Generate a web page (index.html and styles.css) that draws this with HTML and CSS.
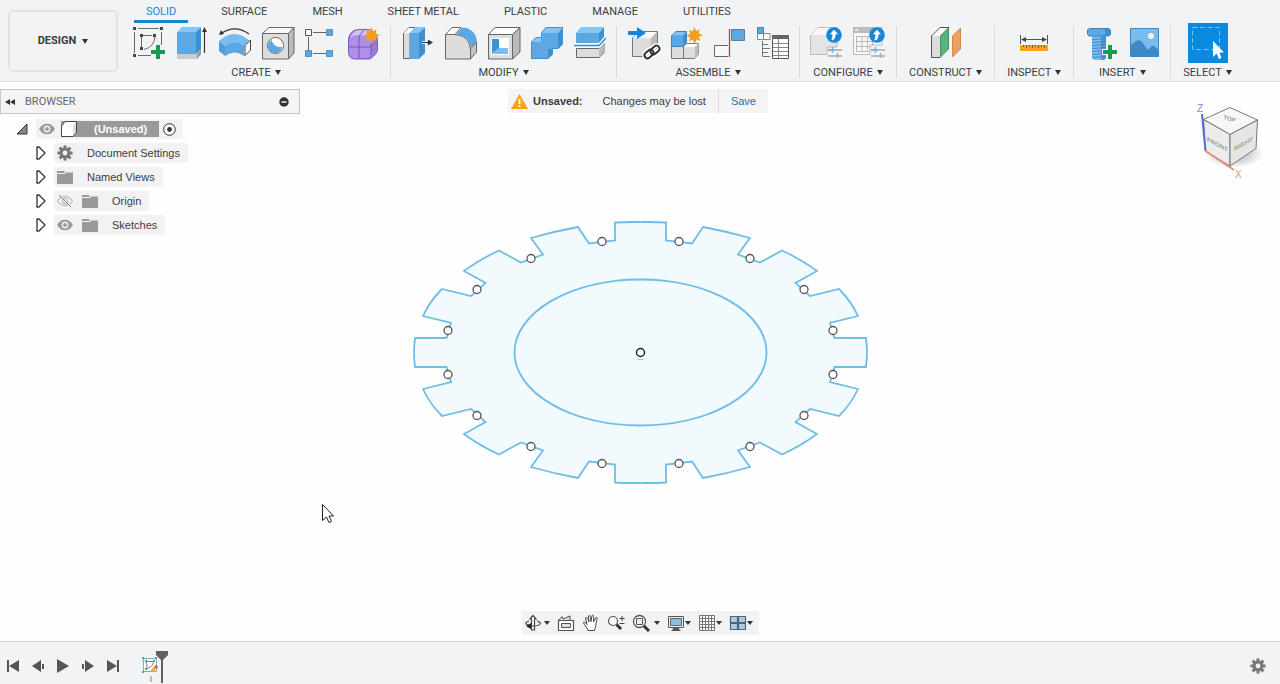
FILE: index.html
```html
<!DOCTYPE html>
<html lang="en">
<head>
<meta charset="utf-8">
<title>Design workspace</title>
<link rel="stylesheet" href="styles.css">
</head>
<body>
<svg class="defs" aria-hidden="true">
  <defs>
    <symbol id="star" viewBox="-9 -9 18 18"><path fill="#f79d1c" d="M0-9 1.8-4.6 5.6-6.6 4.3-2.5 9-.2 4.5 1.5 6.2 5.7 2.2 4.3.2 9-2 4.4-6.1 6.2-4.4 2-9 .2-4.4-1.9-6-5.9-1.9-4.5Z"/></symbol>
    <symbol id="eye" viewBox="0 0 16 12"><path fill="#999" d="M0 6C4-1 12-1 16 6 12 13 4 13 0 6Z"/><circle cx="8" cy="6" r="3.4" fill="#f2f2f4"/><circle cx="8" cy="6" r="2" fill="#999"/></symbol>
    <symbol id="folder" viewBox="0 0 16 13"><path fill="#999" d="M0 0H7L8 2H0ZM0 3H8L9 1.500H16V13H0Z"/></symbol>
    <symbol id="open" viewBox="0 0 10 14"><path fill="#fff" stroke="#333" stroke-width="1.3" stroke-linejoin="round" d="M1 1H3L9 7 3 13H1Z"/></symbol>
    <symbol id="gear" viewBox="-8 -8 16 16"><g fill="#777"><circle r="5.4"/><path id="cog" d="M-1.5-7.6H1.5V7.6H-1.5Z"/><use href="#cog" transform="rotate(45)"/><use href="#cog" transform="rotate(90)"/><use href="#cog" transform="rotate(135)"/></g><circle r="2.4" fill="#f2f2f4"/></symbol>
    <symbol id="up" viewBox="-8 -8 16 16"><circle r="7.8" fill="#1387dc"/><path fill="#fff" d="M0-5.2 4-.8H1.7Q1.7 3 -.8 5.2H-2.6Q-1.4 2-1.6-.8H-4Z"/></symbol>
    <symbol id="sliders" viewBox="0 0 14 11"><g stroke-width="1.4" fill="none"><path stroke="#a9a9ab" d="M0 3H14M0 9H14"/><path stroke="#72b2df" d="M4.5 0V6"/><path stroke="#72b2df" d="M0 3H7"/><path stroke="#a9a9ab" d="M9.5 6V11"/></g></symbol>
    <symbol id="plus" viewBox="0 0 14 14"><path fill="#189b50" d="M5 0H9V5H14V9H9V14H5V9H0V5H5Z"/></symbol>
  </defs>
</svg>

<header class="toolbar">
  <button class="workspace">DESIGN <span class="caret"></span></button>
  <div class="ribbon">
    <nav class="tabs" aria-label="Toolbar tabs">
      <button class="tab active">SOLID</button>
      <button class="tab">SURFACE</button>
      <button class="tab">MESH</button>
      <button class="tab">SHEET METAL</button>
      <button class="tab">PLASTIC</button>
      <button class="tab">MANAGE</button>
      <button class="tab">UTILITIES</button>
    </nav>
    <div class="groups">
      <section class="group">
        <div class="tools">
          <button class="tool" aria-label="Create sketch"><svg viewBox="0 0 36 36"><g fill="none" stroke="#6a6a6a"><path d="M7 3.5H28M3.5 7V28M7 30.5H20M30.5 7V20M12 10.5H21M10.5 12V22M24 12Q23 22 13 24.500"/></g><g fill="#444"><path d="M2 2h3v3H2zM29 2h3v3h-3zM2 29h3v3H2zM9 9h3v3H9zM22 9h3v3h-3zM9 22h3v3H9z"/></g><use href="#plus" x="20" y="20" width="14" height="14"/></svg></button>
          <button class="tool" aria-label="Extrude"><svg viewBox="1 0 36 36"><path fill="#ccc" d="M4 29H24L28 24V29L24 34H4Z"/><path fill="#999" d="M24 29 28 24V29L24 34Z"/><path fill="#5ba8e5" d="M4 7H23V29H4Z"/><path fill="#85c5f4" d="M4 7 9 2H28L23 7Z"/><path fill="#3d8fce" d="M23 7 28 2V24L23 29Z"/><path stroke="#333" stroke-width="1.200" d="M31.500 28V5"/><path fill="#333" d="M31.500 2 34 7H29Z"/></svg></button>
          <button class="tool" aria-label="Revolve"><svg viewBox="0 0 36 36"><path fill="#79bdf0" d="M2 16Q17 2 33 16L28 21Q18 14 8 21Z"/><path fill="#4f9fdc" d="M2 16 8 21V31L2 26Z"/><path fill="#5ba8e5" d="M8 21Q18 14 27 20.500V31Q18 24 8 31Z"/><path fill="#fff" stroke="#444" d="M28 20.500 33.500 15V25L28 30.500Z"/><path fill="none" stroke="#333" stroke-width="1.200" d="M4 8.500Q18-1 32 9"/><path fill="#333" d="M2 10 4 5 7 9Z"/></svg></button>
          <button class="tool" aria-label="Hole"><svg viewBox="0 0 36 36"><g stroke="#666" stroke-linejoin="round"><path fill="#ddd" d="M2.500 8.500H28.500V34H2.500Z"/><path fill="#fafafa" d="M2.500 8.500 9 2.500H34L28.500 8.500Z"/><path fill="#bbb" d="M28.500 8.500 34 2.500V28L28.500 34Z"/><circle cx="15.500" cy="20.500" r="8" fill="#fff"/></g><path fill="#5ba8e5" d="M11.500 15A7 7 0 1 0 22 22Q14 23 11.500 15Z"/></svg></button>
          <button class="tool" aria-label="Pattern"><svg viewBox="2 0 36 36"><path stroke="#666" d="M12 7.500H25M7.500 12V25M12 28.500H25"/><path fill="#fff" stroke="#555" d="M4.500 4.500h6v6h-6z"/><path fill="#5ba8e5" stroke="#4d94ca" d="M25.500 4.500h6v6h-6zM4.500 25.500h6v6h-6zM25.500 25.500h6v6h-6z"/></svg></button>
          <button class="tool" aria-label="Create form"><svg viewBox="1 0 36 36"><path fill="#9b7bdd" stroke="#7c5dbb" d="M3.500 14Q3.500 9 9 5.500Q12 4 24 4.500Q32 7 32.500 15V25Q32 29 25 34H9Q3.500 33 3.500 27Z"/><path fill="#ae8fea" d="M4 15Q5 11 10 11H21Q26 12 26 17V28Q25 33 21 33H9Q4 32 4 27Z"/><path fill="#d4c1f7" d="M5 12Q9 5 14 5H25L22 10.500H10Z"/><path fill="none" stroke="#7756b8" d="M14 33V11L19 5M4 22H26L32 17M26 17V30"/><use href="#star" x="18" y="2" width="17" height="17"/></svg></button>
        </div>
        <button class="label">CREATE <span class="caret"></span></button>
      </section>
      <section class="group">
        <div class="tools">
          <button class="tool" aria-label="Press pull"><svg viewBox="1 0 36 36"><path fill="#ddd" stroke="#666" d="M4.500 8.500 10 2.500H16L11 8.500V33.500H4.500Z"/><path fill="#fff" d="M5 8 10 3H15L11 8Z"/><path fill="#5ba8e5" d="M11 8H20V34H11Z"/><path fill="#85c5f4" d="M11 8 16 2H26L20 8Z"/><path fill="#3d8fce" d="M20 8 26 2V28L20 34Z"/><path stroke="#fff" stroke-width="3" d="M23 17.500H28"/><path stroke="#333" stroke-width="1.200" d="M23 17.500H30"/><path fill="#333" d="M29 14.500 34 17.500 29 20.500Z"/></svg></button>
          <button class="tool" aria-label="Fillet"><svg viewBox="1 0 36 36"><path fill="#fff" stroke="#666" d="M3.500 9.500 10 2.500H19L13 9.500Z"/><path fill="#c4c4c4" stroke="#666" d="M28.500 24 34.500 17V27L28.500 34Z"/><path fill="#5ba8e5" d="M14 9.500 20 2.500Q33 3 35 16L29 23Q27 10 14 9.500Z"/><path fill="#ddd" stroke="#666" d="M3.500 9.500H13Q27 10 28.500 24V34H3.500Z"/></svg></button>
          <button class="tool" aria-label="Shell"><svg viewBox="0 0 36 36"><g stroke="#666" stroke-linejoin="round"><path fill="#ddd" d="M2.500 9.500H26.500V34H2.500Z"/><path fill="#fff" d="M2.500 9.500 9 2.500H34L26.500 9.500Z"/><path fill="#bbb" d="M26.500 9.500 34 2.500V27L26.500 34Z"/></g><path fill="#fff" d="M5 13H23V30H5Z"/><path fill="#3d8fce" d="M6 14H13V23L6 29Z"/><path fill="#79bdf0" d="M7 29 12 23H22V29Z"/></svg></button>
          <button class="tool" aria-label="Combine"><svg viewBox="0 0 36 36"><path fill="#85c5f4" d="M2 17 7 12H12V8L17 2H34L29 8V18Z"/><path fill="#5ba8e5" d="M2 17H12V8H29V24H19V34H2Z"/><path fill="#3d8fce" d="M29 8 34 2V19L29 24H24V29L19 34V24H29Z"/><path fill="none" stroke="#4691cb" d="M2.500 17 7 12.500H12.500V8L17 2.500H33.500V19L29 23.500H23.500V29L19 33.500H2.500Z"/></svg></button>
          <button class="tool" aria-label="Split body"><svg viewBox="0 0 36 36"><path fill="#ddd" stroke="#666" d="M4.500 23.500H27L32 18V28L27 32.500H4.500Z"/><path fill="#bbb" d="M27 23 32 18V28L27 32.500Z"/><path fill="#5ba8e5" d="M4 8H27V18H4Z"/><path fill="#85c5f4" d="M4 8 9 2H32L27 8Z"/><path fill="#3d8fce" d="M27 8 32 2V12L27 18Z"/><path fill="none" stroke="#fff" stroke-width="4" d="M2 20.500H27L34 13"/><path fill="none" stroke="#238bd2" stroke-width="1.400" d="M2 20.500H27L34 13"/></svg></button>
        </div>
        <button class="label">MODIFY <span class="caret"></span></button>
      </section>
      <section class="group">
        <div class="tools">
          <button class="tool" aria-label="Insert component"><svg viewBox="0 0 36 36"><path fill="#ddd" stroke="#777" d="M6.500 13 13 6.500H31.500V26L26 31.500H6.500Z"/><path fill="#fafafa" d="M7 13 13 7H31L25 13Z"/><path fill="#bbb" d="M25 13 31 7V26L25 31Z"/><path fill="#1387dc" d="M2 6H11V2L20 8 11 14V10H2Z"/><g fill="none" stroke="#fff" stroke-width="5"><rect x="18" y="26" width="10" height="6" rx="3" transform="rotate(-42 23 29)"/><rect x="24" y="22" width="10" height="6" rx="3" transform="rotate(-42 29 25)"/></g><g fill="none" stroke="#333" stroke-width="2"><rect x="18" y="26" width="10" height="6" rx="3" transform="rotate(-42 23 29)"/><rect x="24" y="22" width="10" height="6" rx="3" transform="rotate(-42 29 25)"/></g></svg></button>
          <button class="tool" aria-label="New component"><svg viewBox="1 0 36 36"><path fill="#ddd" stroke="#777" d="M3.500 21.500H15.500L18.500 18.500H30.500V29L26.500 33.500H3.500Z"/><path fill="#fff" d="M16 22 19 19H30L27 22Z"/><path fill="#bbb" d="M27 22 30.500 18.500V29L27 33Z"/><path stroke="#777" d="M15.500 21V33"/><path fill="#5ba8e5" stroke="#4084b9" d="M3.500 10.500 8 6.500H18.500V17L15.500 21.500H3.500Z"/><path fill="#85c5f4" d="M4 10 8 7H18L15 10Z"/><path fill="#3d8fce" d="M15 11 18 7V17L15 21Z"/><use href="#star" x="18" y="2" width="17" height="17"/></svg></button>
          <button class="tool" aria-label="Joint"><svg viewBox="0 0 36 36"><path fill="#f8f8f8" stroke="#666" d="M16 20.500H2.500V31.500H16"/><path stroke="#b5482b" stroke-width="1.300" d="M17.500 4V32"/><path fill="#5ba8e5" stroke="#5d7f9b" d="M19.500 4.500H32.500V15.500H19.500Z"/></svg></button>
          <button class="tool" aria-label="Bill of materials"><svg viewBox="0 0 36 36"><path fill="#fff" stroke="#888" d="M2.500 8.500h12.500v6H2.500zM8.500 8.500v6"/><path fill="#5ba8e5" stroke="#4084b9" d="M2.500 2.500h6v6h-6z"/><path fill="none" stroke="#777" d="M7.500 16V31.500H15M7.500 19.500H13M7.500 23.500H15M7.500 27.500H13"/><path fill="#fff" stroke="#555" d="M17.500 10.500H33.500V33.500H17.500Z"/><path fill="#666" d="M17 10H34V14H17Z"/><path stroke="#888" d="M18 18.500H33M18 22.500H33M18 26.500H33M18 30.500H33M23.500 14V33"/></svg></button>
        </div>
        <button class="label">ASSEMBLE <span class="caret"></span></button>
      </section>
      <section class="group">
        <div class="tools">
          <button class="tool" aria-label="Configure design"><svg viewBox="0 0 36 36"><path fill="#e4e4e5" stroke="#bbb" d="M1.500 10.500 9 2.500H28V22H18V29.500H1.500Z"/><path fill="#f8f8f8" d="M2 10 9 3H27L20 10Z"/><use href="#up" x="17" y="2" width="16" height="16"/><use href="#sliders" x="19" y="22" width="14" height="11"/></svg></button>
          <button class="tool" aria-label="Configuration table"><svg viewBox="0 0 36 36"><path fill="#f8f8f8" stroke="#bbb" d="M1.500 2.500H30V20H18V29.500H1.500Z"/><path fill="#bbb" d="M1 2H30V8H1Z"/><path fill="#eee" d="M3 4h3v2H3z"/><path fill="none" stroke="#bbb" d="M4.500 11.500H25M4.500 16.500H25M4.500 21.500H18M4.500 26.500H18M4.500 11V27M10 11V27M15.500 11V27M20.500 11V20"/><use href="#up" x="17" y="2" width="16" height="16"/><use href="#sliders" x="19" y="22" width="14" height="11"/></svg></button>
        </div>
        <button class="label">CONFIGURE <span class="caret"></span></button>
      </section>
      <section class="group">
        <div class="tools">
          <button class="tool" aria-label="Offset plane"><svg viewBox="0 0 36 36"><path fill="#fafafa" stroke="#555" d="M3.500 11 12 2.500H21L12 11.500V32.500H3.500Z"/><path fill="#ddd" d="M4 11H12V32H4Z"/><path fill="#56b47d" stroke="#419464" d="M12.500 12 20.500 3V24L12.500 32Z"/><path fill="#eaa25f" stroke="#cf8b4c" d="M24.500 11 32.500 3V24L24.500 32Z"/></svg></button>
        </div>
        <button class="label">CONSTRUCT <span class="caret"></span></button>
      </section>
      <section class="group">
        <div class="tools">
          <button class="tool" aria-label="Measure"><svg viewBox="0 0 36 36"><path stroke="#555" d="M4.500 10V19M31.500 10V19M7 14.500H29"/><path fill="#444" d="M5 14.500 10 12V17ZM31 14.500 26 12V17Z"/><path fill="#f9a21a" d="M4 20H32V26H4Z"/><path stroke="#8a5a10" d="M7.500 20v2M10.500 20v3M13.500 20v2M16.500 20v3M19.500 20v2M22.500 20v3M25.500 20v2M28.500 20v3"/></svg></button>
        </div>
        <button class="label">INSPECT <span class="caret"></span></button>
      </section>
      <section class="group">
        <div class="tools">
          <button class="tool" aria-label="Insert fastener"><svg viewBox="0 0 36 36"><path fill="#79bdf0" d="M9 11H23V33L21 35H11L9 33Z"/><path fill="#4b98d4" d="M18 11H23V33L21 35H18Z"/><path stroke="#3f87be" d="M9 14.500 23 13.500M9 17.500 23 16.500M9 20.500 23 19.500M9 23.500 23 22.500M9 26.500 23 25.500M9 29.500 23 28.500M9 32.500 23 31.500"/><path fill="#5ba8e5" stroke="#4084b9" d="M4.500 5 6 3.500H26L27.500 5V9.500L26 11H6L4.500 9.500Z"/><path fill="#3d8fce" d="M22 4H26L27 5V9.500L26 10.500H22Z"/><path fill="#f2f3f4" d="M24 19h6v5h5v6h-5v5h-6v-5h-5v-6h5z"/><use href="#plus" x="20" y="20" width="14" height="14"/></svg></button>
          <button class="tool" aria-label="Insert image"><svg viewBox="0 0 36 36"><path fill="#79bdf0" stroke="#3f87be" d="M4.500 3.500H32.500V31.500H4.500Z"/><path fill="#3c89c5" d="M5 20 10 16Q13 14 16 17L22 25 26 21Q28 20 32 25V31H5Z"/><circle cx="25" cy="11" r="3" fill="#fdf3d5"/></svg></button>
        </div>
        <button class="label">INSERT <span class="caret"></span></button>
      </section>
      <section class="group">
        <div class="tools">
          <button class="tool select-tool" aria-label="Select"><svg viewBox="0 0 40 40"><path fill="none" stroke="#6fd0c8" stroke-dasharray="5 2.500" d="M4.500 4.500H31.500V26.500H4.500Z"/><path fill="#fff" d="M25 18V34L28.500 30.500 31 36 33.500 35 31.500 29.500H36Z"/></svg></button>
        </div>
        <button class="label">SELECT <span class="caret"></span></button>
      </section>
    </div>
  </div>
</header>

<main class="canvas">
  <svg class="model" viewBox="-640 -268 1280 557" role="img" aria-label="Gear sketch">
    <defs>
      <path id="quarter" d="M0-130.500H-8Q-17-130.500-25.500-130V-112L-51.500-109-62.500-125.500Q-87-121-109.500-114.500L-97.500-98-119.500-90-141.500-102Q-161-93-176.500-81.500L-155-69.500-169.500-56.500-198.500-63.500Q-211-51-217.500-36.500L-189.500-29.500-194-14.500H-225.500Q-226.500-7-226.500 0"/>
      <path id="fillQuarter" d="M1-130.500H-8Q-17-130.500-25.500-130V-112L-51.500-109-62.500-125.500Q-87-121-109.500-114.500L-97.500-98-119.500-90-141.500-102Q-161-93-176.500-81.500L-155-69.500-169.500-56.500-198.500-63.500Q-211-51-217.500-36.500L-189.500-29.500-194-14.500H-225.500Q-226.500-7-226.500 1H1Z"/>
      <g id="pins"><circle cx="-38.500" cy="-111" r="4"/><circle cx="-109.500" cy="-94" r="4"/><circle cx="-163.500" cy="-63" r="4"/><circle cx="-192.500" cy="-22" r="4"/></g>
    </defs>
    <g transform="translate(.5 .5)">
      <g fill="#f1fafd"><use href="#fillQuarter"/><use href="#fillQuarter" transform="scale(-1 1)"/><use href="#fillQuarter" transform="scale(1 -1)"/><use href="#fillQuarter" transform="scale(-1 -1)"/></g>
      <g fill="none" stroke="#70bce8" stroke-width="1.800"><use href="#quarter"/><use href="#quarter" transform="scale(-1 1)"/><use href="#quarter" transform="scale(1 -1)"/><use href="#quarter" transform="scale(-1 -1)"/><ellipse rx="126" ry="73"/></g>
      <g fill="#fff" stroke="#555" stroke-width="1.300"><use href="#pins"/><use href="#pins" transform="scale(-1 1)"/><use href="#pins" transform="scale(1 -1)"/><use href="#pins" transform="scale(-1 -1)"/></g>
      <circle r="4" fill="#fff" stroke="#223" stroke-width="1.500"/>
      <path stroke="#bbb" d="M-3 7H3"/>
    </g>
    <path fill="#fff" stroke="#222" stroke-linejoin="round" d="M-317.500 152.500V168.500L-313.500 165-311 170.500-308.500 169.500-311 164H-306.500Z"/>
  </svg>

  <aside class="browser">
    <div class="browser-head">
      <button class="plain" aria-label="Collapse browser"><svg width="10" height="6" viewBox="0 0 10 6"><path fill="#333" d="M5 0V6L0 3ZM10 0V6L5 3Z"/></svg></button>
      <h2>BROWSER</h2>
      <button class="plain" aria-label="Hide browser"><svg width="10" height="10" viewBox="0 0 10 10"><circle cx="5" cy="5" r="4.700" fill="#333"/><path stroke="#fff" stroke-width="1.400" d="M2.500 5H7.500"/></svg></button>
    </div>
    <ul class="tree">
      <li class="root">
        <svg width="12" height="12" viewBox="0 0 12 12"><path fill="#888" stroke="#333" d="M1 11 11 1V11Z"/></svg>
        <div class="node">
          <svg width="16" height="12"><use href="#eye"/></svg>
          <span class="doc"><svg width="16" height="16" viewBox="0 0 16 16"><path fill="#fff" stroke="#444" stroke-linejoin="round" d="M.5 5 4 .5H15.500V11L12 15.500H.5Z"/><path fill="#ddd" d="M12 5 15 1V11L12 15Z"/></svg><b>(Unsaved)</b></span>
          <svg width="13" height="13" viewBox="0 0 13 13"><circle cx="6.500" cy="6.500" r="5.800" fill="#fff" stroke="#333"/><circle cx="6.500" cy="6.500" r="2.400" fill="#333"/></svg>
        </div>
      </li>
      <li><svg width="10" height="14"><use href="#open"/></svg><div class="node"><svg width="16" height="16"><use href="#gear"/></svg><span>Document Settings</span></div></li>
      <li><svg width="10" height="14"><use href="#open"/></svg><div class="node"><svg width="16" height="13"><use href="#folder"/></svg><span>Named Views</span></div></li>
      <li><svg width="10" height="14"><use href="#open"/></svg><div class="node"><svg width="16" height="14" viewBox="0 0 16 14"><path fill="none" stroke="#aaa" d="M.5 7C4 1 12 1 15.500 7 12 13 4 13 .5 7Z"/><circle cx="8" cy="7" r="2.500" fill="none" stroke="#aaa"/><path stroke="#888" d="M2 1 14 13"/></svg><svg width="16" height="13"><use href="#folder"/></svg><span>Origin</span></div></li>
      <li><svg width="10" height="14"><use href="#open"/></svg><div class="node"><svg width="16" height="12"><use href="#eye"/></svg><svg width="16" height="13"><use href="#folder"/></svg><span>Sketches</span></div></li>
    </ul>
  </aside>

  <div class="notice">
    <svg width="17" height="15" viewBox="0 0 17 15"><path fill="#f9a01b" d="M8.500 0 17 15H0Z"/><path stroke="#fff" stroke-width="1.800" d="M8.500 5V10M8.500 11.300V13"/></svg>
    <b>Unsaved:</b>
    <span>Changes may be lost</span>
    <a href="#save">Save</a>
  </div>

  <svg class="cube" width="100" height="100" viewBox="0 0 100 100" role="img" aria-label="View cube">
    <defs><radialGradient id="shade"><stop offset=".5" stop-color="#d2d2d2"/><stop offset="1" stop-color="#fefefe"/></radialGradient></defs>
    <ellipse cx="54" cy="64" rx="30" ry="14" fill="url(#shade)"/>
    <g stroke="#777" stroke-linejoin="round"><path fill="#f7f7f7" d="M50 17.500 77.500 30 50 44.500 23.500 29.500Z"/><path fill="#ececec" d="M23.500 29.500 50 44.500V76L25.500 61Z"/><path fill="#e5e5e5" d="M77.500 30 50 44.500V76L76 58.500Z"/></g>
    <path stroke="#5c66dc" stroke-width="2" d="M22 24 25.500 61"/>
    <path stroke="#eb8f79" stroke-width="2" d="M25.500 61 54 80"/>
    <g class="face"><text transform="translate(27 51) skewY(28)">FRONT</text><text transform="translate(54 61) skewY(-28)">RIGHT</text><text transform="translate(43 29) rotate(16)">TOP</text></g>
    <text class="axis-z" x="17" y="22">Z</text><text class="axis-x" x="55" y="88">X</text>
  </svg>

  <div class="viewbar">
    <button class="plain" aria-label="Orbit"><svg width="18" height="18" viewBox="0 0 18 18"><g fill="none" stroke="#444" stroke-width="1.200"><path fill="#fff" d="M7.500 16V5H6L9 1.500 12 5H10.500V16Z"/><path d="M5 7C0 8.500 1 11.500 9 12 18 12 18 8 13 7"/></g><path fill="#222" d="M2 12 7 9V15Z"/></svg><span class="caret"></span></button>
    <button class="plain" aria-label="Look at"><svg width="18" height="18" viewBox="0 0 18 18"><path fill="#fff" stroke="#555" stroke-width="1.200" d="M1.500 6.500H16.500V16.500H1.500Z"/><path fill="#ddd" stroke="#555" d="M4.500 9.500H13.500V13.500H4.500ZM2 6 5 2.500 6 5 13 2V6"/></svg></button>
    <button class="plain" aria-label="Pan"><svg width="18" height="18" viewBox="0 0 18 18"><path fill="#fff" stroke="#444" stroke-linejoin="round" d="M6 16.500C5 13 2 11 1.500 8.500 2.500 7.500 4 9 5 10.500L3.500 4C4.500 2.500 5.500 3.500 7 8L6.500 2C7.500 .5 8.500 1.500 9 7.500L10 1.500C11.500.5 12 2 11.500 8L14 3.500C15.500 3 15.500 4.500 14 9 14 13 13 14 12.500 16.500Z"/></svg></button>
    <button class="plain" aria-label="Zoom"><svg width="18" height="18" viewBox="0 0 18 18"><circle cx="6" cy="7" r="4.500" fill="#fff" stroke="#555" stroke-width="1.200"/><path stroke="#333" stroke-width="3" d="M9.500 10.500 14 15"/><path stroke="#444" d="M12.500 4.500H17.500M15 2V7M12.500 9.500H17.500"/></svg></button>
    <button class="plain wide" aria-label="Fit"><svg width="18" height="18" viewBox="0 0 18 18"><circle cx="7.500" cy="7.500" r="6" fill="#fff" stroke="#555" stroke-width="1.300"/><path stroke="#333" stroke-width="3" d="M12 12 17 17"/><path fill="#eee" stroke="#555" d="M4.500 4.500h6v6h-6z"/></svg><span class="caret"></span></button>
    <button class="plain" aria-label="Display settings"><svg width="18" height="18" viewBox="0 0 18 18"><path fill="#eee" stroke="#555" d="M1.500 2.500H16.500V13.500H1.500Z"/><path fill="#8fbfe0" stroke="#567" d="M3.500 4.500H14.500V11.500H3.500Z"/><path fill="#555" d="M6 14H12V15L14 17H4L6 15Z"/></svg><span class="caret"></span></button>
    <button class="plain" aria-label="Grid"><svg width="18" height="18" viewBox="0 0 18 18"><path fill="#fff" stroke="#777" d="M1.500 1.500H16.500V16.500H1.500ZM1.500 4.500H16.500M1.500 7.500H16.500M1.500 10.500H16.500M1.500 13.500H16.500M4.500 1.500V16.500M7.500 1.500V16.500M10.500 1.500V16.500M13.500 1.500V16.500"/></svg><span class="caret"></span></button>
    <button class="plain" aria-label="Viewports"><svg width="18" height="18" viewBox="0 0 18 18"><path fill="#a9cde6" stroke="#4d6475" stroke-width="1.200" d="M1.500 2.500h7v6h-7zM9.500 2.500h7v6h-7zM1.500 9.500h7v6h-7zM9.500 9.500h7v6h-7z"/></svg><span class="caret"></span></button>
  </div>
</main>

<footer class="timeline">
  <button class="plain" aria-label="Go to start"><svg width="12" height="12" viewBox="0 0 12 12"><path fill="#555" d="M0 0H2V12H0ZM12 0V12L2 6Z"/></svg></button>
  <button class="plain" aria-label="Step back"><svg width="12" height="12" viewBox="0 0 12 12"><path fill="#555" d="M9 0V12L0 6ZM10 4H12V9H10Z"/></svg></button>
  <button class="plain" aria-label="Play"><svg width="12" height="14" viewBox="0 0 12 14"><path fill="#555" d="M0 0 12 7 0 14Z"/></svg></button>
  <button class="plain" aria-label="Step forward"><svg width="12" height="12" viewBox="0 0 12 12"><path fill="#555" d="M3 0V12L12 6ZM0 4H2V9H0Z"/></svg></button>
  <button class="plain" aria-label="Go to end"><svg width="12" height="12" viewBox="0 0 12 12"><path fill="#555" d="M0 0 10 6 0 12ZM10 0H12V12H10Z"/></svg></button>
  <div class="history">
    <svg width="28" height="34" viewBox="0 0 28 34"><path fill="#fff" stroke="#8aa" d="M2.500 7.500H15.500V20.500H2.500Z"/><path fill="none" stroke="#789" d="M5.500 10.500H12.500Q12 16 6 17.500Z"/><path fill="#3ba4e0" d="M1 6h2v2H1zM14 6h2v2h-2zM1 20h2v2H1zM4 9h2v2H4zM12 9h2v2h-2zM4 17h2v2H4z"/><path stroke="#f2a53a" stroke-width="3" d="M10.500 20.500 15 16"/><path stroke="#d94a3a" stroke-width="3" d="M14.500 16.500 16 15"/><path stroke="#bbb" stroke-width="2" d="M10 25V31"/><path fill="#606060" d="M15 0H27V4L22 9V32H20V9L15 4Z"/></svg>
  </div>
  <button class="plain settings" aria-label="Timeline settings"><svg width="16" height="16"><use href="#gear"/></svg></button>
</footer>
</body>
</html>
```
FILE: styles.css
```css
* { box-sizing: border-box; }

body {
  margin: 0;
  min-height: 100vh;
  display: flex;
  flex-direction: column;
  background: #fefefe;
  color: #3a3d42;
  font: 11px/16px "Liberation Sans", Arial, sans-serif;
}

button {
  border: 0;
  padding: 0;
  background: none;
  color: inherit;
  font: 11px/16px Roboto, "Liberation Sans", sans-serif;
}

svg { display: block; flex: none; }
.defs { position: absolute; width: 0; height: 0; }

.caret {
  display: inline-block;
  border: 3px solid transparent;
  border-top: 5px solid #333;
  border-bottom: 0;
}

.plain { display: flex; align-items: center; justify-content: center; }

/* Toolbar */
.toolbar {
  display: flex;
  background: #f2f3f5;
  border-bottom: 1px solid #dedfe1;
}

.workspace {
  width: 110px;
  margin: 10px 4px 9px 8px;
  border: 2px solid #e2e3e5;
  border-radius: 5px;
  display: flex;
  align-items: center;
  justify-content: center;
  gap: 6px;
  font-weight: 700;
}

.ribbon { flex: 1; }
.tabs { display: flex; gap: 21px; padding-left: 12px; }

.tab {
  height: 23px;
  padding: 4px 12px 0;
  border-bottom: 3px solid transparent;
}

.tab.active { color: #1487cf; border-color: #1487cf; }

.groups { display: flex; }
.group { position: relative; padding: 0 6px 0 5px; }

.group + .group::before {
  content: "";
  position: absolute;
  left: -1px;
  top: 3px;
  bottom: 3px;
  width: 1px;
  background: #d9dadc;
}

.tools { display: flex; justify-content: center; }

.tool {
  width: 43px;
  height: 40px;
  display: flex;
  align-items: center;
  justify-content: center;
}

.tool svg { width: 36px; height: 36px; }
.select-tool { width: 40px; background: #0a8ade; }
.select-tool svg { width: 40px; height: 40px; }

.label {
  width: 100%;
  height: 18px;
  padding: 1px 7px 0;
  display: flex;
  align-items: center;
  justify-content: center;
  gap: 4px;
}

/* Canvas */
.canvas {
  position: relative;
  flex: 1;
  margin-top: 2px;
  display: flex;
  flex-direction: column;
  justify-content: space-between;
}

.model { position: absolute; inset: 0; width: 100%; height: 100%; }
.browser { position: relative; width: 300px; padding-top: 5px; }

.browser-head {
  height: 25px;
  padding: 0 10px 0 4px;
  display: flex;
  align-items: center;
  gap: 10px;
  background: #f4f4f5;
  border: 1px solid #c6c6ca;
}

.browser-head h2 {
  flex: 1;
  margin: 0;
  color: #666;
  font: 11px/16px Roboto, sans-serif;
}

.tree { margin: 3px 0 0; padding: 0; list-style: none; }

.tree li {
  height: 24px;
  padding-left: 36px;
  display: flex;
  align-items: center;
  gap: 8px;
}

.tree .root { padding-left: 16px; }

.node {
  height: 20px;
  padding: 0 8px 0 3px;
  display: flex;
  align-items: center;
  gap: 9px;
  background: #f2f2f4;
}

.node > span:last-child { margin-left: 5px; }
.root .node { gap: 4px; padding: 0 7px 0 3px; }

.doc {
  height: 16px;
  margin-left: 2px;
  padding-right: 12px;
  display: flex;
  gap: 17px;
  background: #999;
  color: #fff;
}

.notice {
  position: absolute;
  top: 5px;
  left: 50%;
  transform: translateX(-132px);
  height: 24px;
  padding-left: 3px;
  display: flex;
  align-items: center;
  background: #f4f4f5;
}

.notice b { margin: 0 20px 0 5px; }

.notice a {
  height: 24px;
  margin-left: 12px;
  padding: 0 12px;
  border-left: 1px solid #dcdce0;
  color: #1470b0;
  line-height: 24px;
  text-decoration: none;
}

.cube { position: absolute; top: 6px; right: 0; }
.cube text { font: 10px "Liberation Sans", sans-serif; }
.cube .face text { font-size: 6px; font-weight: 700; fill: #999; }
.cube .axis-z { fill: #8088e4; }
.cube .axis-x { fill: #ef8f78; }

.viewbar {
  position: relative;
  align-self: center;
  height: 24px;
  margin: 0 0 6px;
  padding: 0 6px 0 2px;
  display: flex;
  align-items: center;
  gap: 8px;
  background: #f2f2f5;
}

.viewbar .plain { gap: 2px; }
.viewbar .caret { border-top-width: 4px; }
.viewbar .plain:nth-child(n+6) { gap: 0; margin-left: -1px; }
.viewbar .plain:nth-child(-n+4) { margin-right: -1px; }
.viewbar .wide { gap: 4px; }

/* Timeline */
.timeline {
  height: 43px;
  padding: 9px 14px 0 0;
  display: flex;
  align-items: flex-start;
  background: #f2f3f5;
  border-top: 1px solid #d2d2d6;
}

.timeline .plain { width: 25px; height: 30px; }
.history { flex: 1; padding-left: 16px; }
.timeline .settings { width: 16px; }
```
